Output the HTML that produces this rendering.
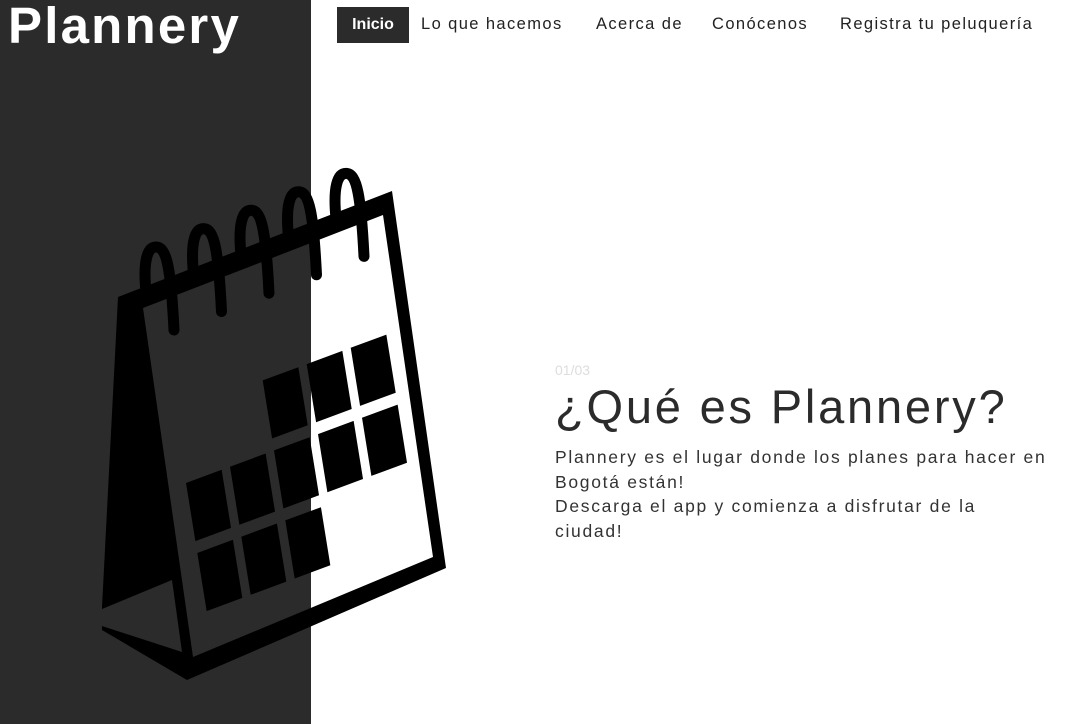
<!DOCTYPE html>
<html><head><meta charset="utf-8"><style>
*{margin:0;padding:0;box-sizing:border-box}
body{width:1076px;height:724px;overflow:hidden;background:#fff;position:relative;font-family:"Liberation Sans",sans-serif;color:#333}
.side{position:absolute;left:0;top:0;width:311px;height:724px;background:#2b2b2b}
.logo{position:absolute;left:8px;top:-4px;font-size:51px;font-weight:bold;color:#fff;letter-spacing:2.2px}
.nav{position:absolute;top:15px;font-size:16.5px;color:#222;letter-spacing:1.4px;white-space:nowrap}
.act{position:absolute;left:337px;top:7px;width:72px;height:36px;background:#2b2b2b;color:#fff;font-weight:bold;font-size:16px;text-align:center;line-height:36px}
.t{position:absolute;left:555px;white-space:nowrap}
svg{position:absolute;left:0;top:0}
</style></head><body>
<div class="side"></div>
<div class="logo">Plannery</div>
<div class="act">Inicio</div>
<div class="nav" style="left:421px">Lo que hacemos</div>
<div class="nav" style="left:596px">Acerca de</div>
<div class="nav" style="left:712px">Conócenos</div>
<div class="nav" style="left:840px">Registra tu peluquería</div>
<svg width="1076" height="724" viewBox="0 0 1076 724">
<path fill="#000" fill-rule="evenodd" d="M118,297 L392,191 L446,568 L187,680 L102,630 L102,607 Z M143,308 L383,215 L433,557 L193,657 Z M102,609 L172,580 L182,652 L102,626 Z"/>
<g fill="none" stroke="#000" stroke-width="11" stroke-linecap="round">
<path id="r" d="M146,292 C143,262 147,247 156,247 C167,247 171,270 174,330"/>
<use href="#r" transform="translate(47.5,-18.4)"/>
<use href="#r" transform="translate(95,-36.8)"/>
<use href="#r" transform="translate(142.5,-55.2)"/>
<use href="#r" transform="translate(190,-73.6)"/>
</g>
<g fill="#000" transform="matrix(44,-16.3,11.3,70,186,483)">
<rect x="2" y="-1" width="0.81" height="0.83"/><rect x="3" y="-1" width="0.81" height="0.83"/><rect x="4" y="-1" width="0.81" height="0.83"/>
<rect x="0" y="0" width="0.81" height="0.83"/><rect x="1" y="0" width="0.81" height="0.83"/><rect x="2" y="0" width="0.81" height="0.83"/><rect x="3" y="0" width="0.81" height="0.83"/><rect x="4" y="0" width="0.81" height="0.83"/>
<rect x="0" y="1" width="0.81" height="0.83"/><rect x="1" y="1" width="0.81" height="0.83"/><rect x="2" y="1" width="0.81" height="0.83"/>
</g>
</svg>
<div class="t" style="top:362px;font-size:14px;color:#ddd">01/03</div>
<div class="t" style="top:379px;font-size:47px;color:#2b2b2b;letter-spacing:2.8px">¿Qué es Plannery?</div>
<div class="t" style="top:445px;font-size:17.5px;line-height:24.5px;color:#333;letter-spacing:1.7px">Plannery es el lugar donde los planes para hacer en<br>Bogotá están!<br>Descarga el app y comienza a disfrutar de la<br>ciudad!</div>
</body></html>
